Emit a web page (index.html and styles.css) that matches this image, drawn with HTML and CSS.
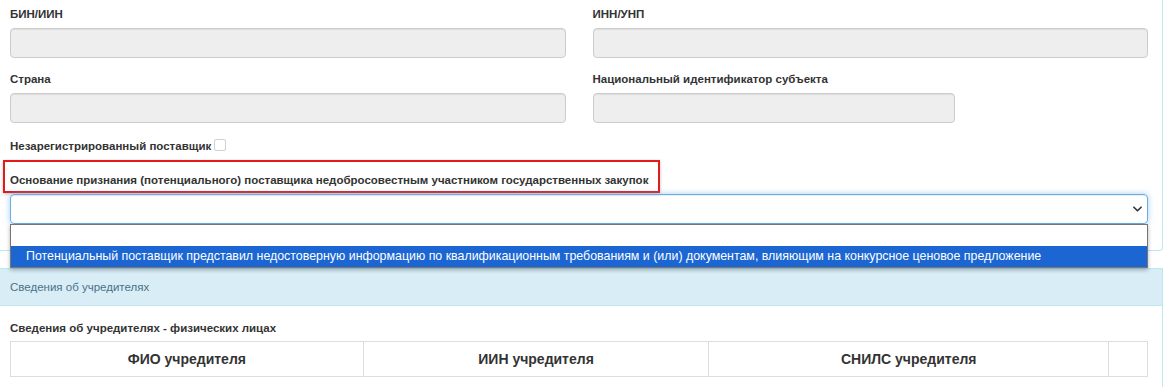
FILE: index.html
```html
<!DOCTYPE html>
<html lang="ru">
<head>
  <meta charset="UTF-8" />
  <title>Сведения о поставщике</title>
  <link rel="stylesheet" href="styles.css">
</head>
<body>

  <div class="panel panel-main">
    <div class="form-grid">
      <div class="form-group">
        <label class="control-label">БИН/ИИН</label>
        <div class="form-control" readonly></div>
      </div>
      <div class="form-group">
        <label class="control-label">ИНН/УНП</label>
        <div class="form-control"></div>
      </div>
      <div class="form-group">
        <label class="control-label">Страна</label>
        <div class="form-control"></div>
      </div>
      <div class="form-group">
        <label class="control-label">Национальный идентификатор субъекта</label>
        <div class="form-control short"></div>
      </div>
    </div>

    <div class="check-row">
      <span class="control-label">Незарегистрированный поставщик</span>
      <span class="checkbox"></span>
    </div>

    <div class="select-group">
      <div class="marked-label">
        <span class="control-label">Основание признания (потенциального) поставщика недобросовестным участником государственных закупок</span>
      </div>
      <div class="select-wrap">
        <div class="form-select">
          <svg class="chevron" viewBox="0 0 10 6" fill="none" stroke="#333" stroke-width="1.8" stroke-linecap="round" stroke-linejoin="round">
            <polyline points="1 1 5 5 9 1" />
          </svg>
        </div>
        <div class="dropdown">
          <div class="option"></div>
          <div class="option selected">Потенциальный поставщик представил недостоверную информацию по квалификационным требованиям и (или) документам, влияющим на конкурсное ценовое предложение</div>
        </div>
      </div>
    </div>
  </div>

  <div class="panel panel-info">
    <div class="panel-heading">Сведения об учредителях</div>
    <div class="panel-body">
      <div class="subtitle">Сведения об учредителях - физических лицах</div>
      <table class="table">
        <thead>
          <tr>
            <th class="col-fio">ФИО учредителя</th>
            <th class="col-iin">ИИН учредителя</th>
            <th class="col-snils">СНИЛС учредителя</th>
            <th class="col-act"></th>
          </tr>
        </thead>
      </table>
    </div>
  </div>

</body>
</html>
```

FILE: styles.css
```css
* {
  box-sizing: border-box;
}

html, body {
  margin: 0;
  background: #fff;
  color: #333;
  font-family: 'Liberation Sans', Arial, sans-serif;
  font-size: 11.5px;
  overflow: hidden;
}

.panel {
  width: 1163px;
  border: 1px solid #bce8f1;
  border-left: 0;
  background: #fff;
}

.panel-main {
  border-top: 0;
  border-radius: 0 0 4px 0;
  padding: 6px 14px 26px 10px;
}

.form-grid {
  display: grid;
  grid-template-columns: 1fr 1fr;
  column-gap: 27px;
}

.form-group {
  margin-bottom: 13px;
}

.control-label {
  display: block;
  font-weight: bold;
  line-height: 17px;
  margin-bottom: 5px;
}

.form-control {
  height: 30px;
  background: #eee;
  border: 1px solid #ccc;
  border-radius: 4px;
  box-shadow: inset 0 1px 1px rgba(0, 0, 0, 0.075);
}

.form-control.short {
  width: 362px;
}

.check-row {
  display: flex;
  align-items: center;
  gap: 3px;
  margin-top: 2px;
  height: 17px;
}

.check-row .control-label {
  margin: 0;
}

.checkbox {
  width: 12px;
  height: 12px;
  border: 1px solid #d0d0d0;
  border-radius: 2px;
  background: #fff;
  margin-top: -3px;
}

.select-group {
  margin-top: 5px;
}

.marked-label {
  display: inline-block;
  margin-left: -7px;
  padding: 10px 10px 2px 5px;
  border: 2px solid #e21a1a;
  box-shadow: 0 1px 3px rgba(0, 0, 0, 0.25);
}

.marked-label .control-label {
  margin: 0;
}

.select-wrap {
  position: relative;
  margin-top: 1px;
}

.form-select {
  height: 30px;
  display: flex;
  align-items: center;
  justify-content: flex-end;
  padding-right: 5px;
  border: 1px solid #66afe9;
  border-radius: 4px;
  box-shadow: inset 0 1px 1px rgba(0, 0, 0, 0.075), 0 0 6px rgba(102, 175, 233, 0.6);
}

.chevron {
  width: 9px;
  height: 6px;
}

.dropdown {
  position: absolute;
  top: 30px;
  left: 0;
  right: 0;
  z-index: 5;
  background: #fff;
  border: 1px solid #767676;
  box-shadow: 0 2px 4px rgba(0, 0, 0, 0.3);
  font-size: 12.4px;
}

.option {
  height: 21px;
  line-height: 21px;
  padding-left: 15px;
  white-space: nowrap;
}

.option.selected {
  background: #1b66d2;
  color: #fff;
}

.panel-info {
  margin-top: 17px;
}

.panel-heading {
  height: 37px;
  line-height: 36px;
  padding-left: 10px;
  background: #d9edf7;
  border-bottom: 1px solid #bce8f1;
  color: #4a7188;
}

.panel-body {
  padding: 14px 14px 10px 10px;
}

.subtitle {
  font-weight: bold;
  line-height: 17px;
  margin-bottom: 4px;
}

.table {
  width: 100%;
  border-collapse: collapse;
}

.table th {
  height: 35px;
  border: 1px solid #ddd;
  font-size: 14px;
  font-weight: bold;
  text-align: center;
  color: #333;
}

.col-fio { width: 353px; }
.col-iin { width: 346px; }
.col-snils { width: 400px; }
.col-act { width: 39px; }
```
